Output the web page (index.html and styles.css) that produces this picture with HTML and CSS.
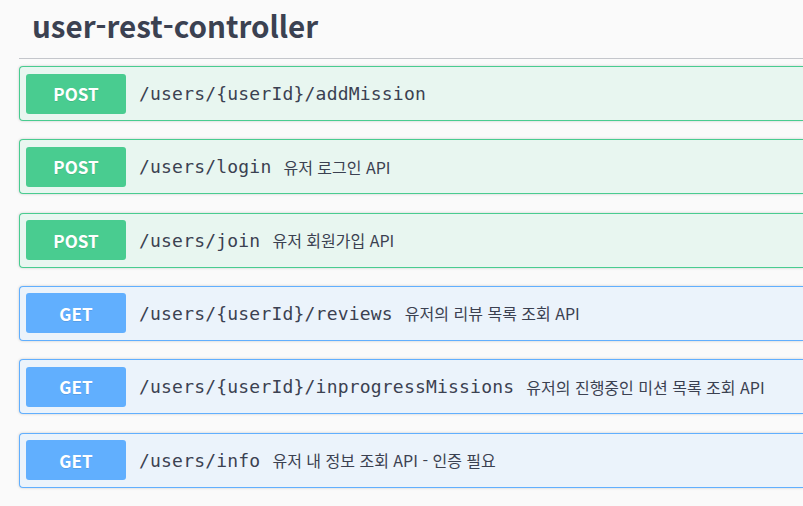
FILE: index.html
```html
<!DOCTYPE html>
<html lang="ko">
<head>
<meta charset="utf-8">
<title>user-rest-controller</title>
<link rel="stylesheet" href="styles.css">
</head>
<body>
<div class="page">
  <h3 class="tag">user-rest-controller</h3>
  <div class="ops">
    <div class="op op-post">
      <span class="method">POST</span>
      <span class="path">/users/{userId}/addMission</span>
    </div>
    <div class="op op-post">
      <span class="method">POST</span>
      <span class="path">/users/login</span>
      <span class="desc">유저 로그인 API</span>
    </div>
    <div class="op op-post">
      <span class="method">POST</span>
      <span class="path">/users/join</span>
      <span class="desc">유저 회원가입 API</span>
    </div>
    <div class="op op-get">
      <span class="method">GET</span>
      <span class="path">/users/{userId}/reviews</span>
      <span class="desc">유저의 리뷰 목록 조회 API</span>
    </div>
    <div class="op op-get">
      <span class="method">GET</span>
      <span class="path">/users/{userId}/inprogressMissions</span>
      <span class="desc">유저의 진행중인 미션 목록 조회 API</span>
    </div>
    <div class="op op-get">
      <span class="method">GET</span>
      <span class="path">/users/info</span>
      <span class="desc">유저 내 정보 조회 API - 인증 필요</span>
    </div>
  </div>
</div>
</body>
</html>
```
FILE: styles.css
```css
html, body {
  margin: 0;
  padding: 0;
  background: #fafafa;
  overflow: hidden;
}
body {
  width: 803px;
  height: 506px;
  font-family: "Noto Sans CJK KR", "Noto Sans", sans-serif;
  color: #3b4151;
}
.page {
  padding-left: 19px;
}
.tag {
  margin: 0;
  height: 59px;
  box-sizing: border-box;
  padding: 4px 0 0 13px;
  font-size: 29.6px;
  line-height: 44px;
  font-weight: 700;
  color: #3b4151;
  border-bottom: 1px solid #c4c6cb;
  margin-bottom: 7px;
}
.ops {
  display: flex;
  flex-direction: column;
  gap: 18.33px;
}
.op {
  display: flex;
  align-items: center;
  height: 55px;
  box-sizing: border-box;
  padding: 0 6px;
  border: 1px solid;
  border-right-width: 0;
  border-radius: 4px 0 0 4px;
  box-shadow: 0 0 3px rgba(0,0,0,0.19);
  white-space: nowrap;
}
.op-post {
  background: #e8f6f0;
  border-color: #49cc90;
}
.op-get {
  background: #ebf3fb;
  border-color: #61affe;
}
.method {
  flex: none;
  width: 100px;
  height: 40px;
  border-radius: 3px;
  color: #fff;
  font-size: 17px;
  font-weight: 700;
  display: flex;
  align-items: center;
  justify-content: center;
  text-shadow: 0 1px 0 rgba(0,0,0,0.1);
}
.op-post .method { background: #49cc90; }
.op-get .method { background: #61affe; }
.path {
  font-family: "DejaVu Sans Mono", "Liberation Mono", monospace;
  font-size: 18px;
  letter-spacing: 0.2px;
  color: #3b4151;
  padding: 0 12px 0 13px;
}
.desc {
  font-size: 16px;
  color: #3b4151;
}
```
